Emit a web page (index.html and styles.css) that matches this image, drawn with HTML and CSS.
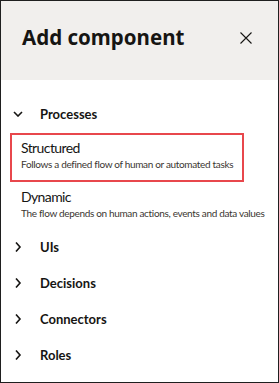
FILE: index.html
```html
<!DOCTYPE html>
<html lang="en">
<head>
  <meta charset="UTF-8" />
  <meta name="viewport" content="width=device-width, initial-scale=1.0"/>
  <title>Add component</title>
  <link rel="stylesheet" href="styles.css">
</head>
<body>

  <div class="painel">
    <div class="cabecalho">
      <h1>Add component</h1>
      <button class="fechar" aria-label="Close">
        <svg width="12" height="12" viewBox="0 0 12 12">
          <path d="M0.5 0.5 L11.5 11.5 M11.5 0.5 L0.5 11.5" stroke="#161513" stroke-width="1.1" fill="none"/>
        </svg>
      </button>
    </div>

    <div class="lista">
      <div class="grupo aberto">
        <svg class="seta" width="10" height="6" viewBox="0 0 10 6">
          <path d="M1 1 L5 5 L9 1" stroke="#161513" stroke-width="1.6" fill="none"/>
        </svg>
        <span>Processes</span>
      </div>

      <div class="item selecionado">
        <div class="item-titulo">Structured</div>
        <div class="item-desc">Follows a defined flow of human or automated tasks</div>
      </div>
      <div class="item">
        <div class="item-titulo">Dynamic</div>
        <div class="item-desc">The flow depends on human actions, events and data values</div>
      </div>

      <div class="grupo">
        <svg class="seta" width="10" height="10" viewBox="0 0 10 10">
          <path d="M3 0.5 L7 5 L3 9.5" stroke="#161513" stroke-width="1.6" fill="none"/>
        </svg>
        <span>UIs</span>
      </div>
      <div class="grupo">
        <svg class="seta" width="10" height="10" viewBox="0 0 10 10">
          <path d="M3 0.5 L7 5 L3 9.5" stroke="#161513" stroke-width="1.6" fill="none"/>
        </svg>
        <span>Decisions</span>
      </div>
      <div class="grupo">
        <svg class="seta" width="10" height="10" viewBox="0 0 10 10">
          <path d="M3 0.5 L7 5 L3 9.5" stroke="#161513" stroke-width="1.6" fill="none"/>
        </svg>
        <span>Connectors</span>
      </div>
      <div class="grupo">
        <svg class="seta" width="10" height="10" viewBox="0 0 10 10">
          <path d="M3 0.5 L7 5 L3 9.5" stroke="#161513" stroke-width="1.6" fill="none"/>
        </svg>
        <span>Roles</span>
      </div>
    </div>
  </div>

</body>
</html>
```

FILE: styles.css
```css
body {
  font-family: Lato, sans-serif;
  background: white;
  margin: 0;
  color: #161513;
}

.painel {
  box-sizing: border-box;
  width: 279px;
  height: 383px;
  border: 1px solid #1f1f1f;
  background: white;
}

.cabecalho {
  box-sizing: border-box;
  height: 79px;
  background: #f1efed;
  display: flex;
  align-items: flex-start;
  justify-content: space-between;
  padding: 23px 26px 0 21px;
}

.cabecalho h1 {
  margin: 0;
  font-family: 'Noto Sans', sans-serif;
  font-size: 20.5px;
  line-height: 26px;
  font-weight: 700;
  color: #161513;
}

.fechar {
  border: none;
  background: none;
  padding: 0;
  margin-top: 8px;
  width: 12px;
  height: 12px;
  display: flex;
}

.lista {
  padding-top: 16px;
}

.grupo {
  height: 36px;
  display: flex;
  align-items: center;
  font-size: 13px;
  font-weight: 700;
}

.seta {
  margin-left: 12px;
  margin-right: 17px;
}

.item {
  box-sizing: border-box;
  width: fit-content;
  height: 47px;
  margin-left: 9px;
  padding: 4px 9px 0;
  border: 2px solid transparent;
}

.item.selecionado {
  height: 49px;
  margin-top: 1px;
  border-color: #e8474c;
}

.item-titulo {
  font-size: 14px;
  line-height: 18px;
  letter-spacing: -0.6px;
}

.item-desc {
  font-size: 10px;
  line-height: 14px;
  letter-spacing: -0.33px;
  color: #3a3631;
  white-space: nowrap;
}
```
